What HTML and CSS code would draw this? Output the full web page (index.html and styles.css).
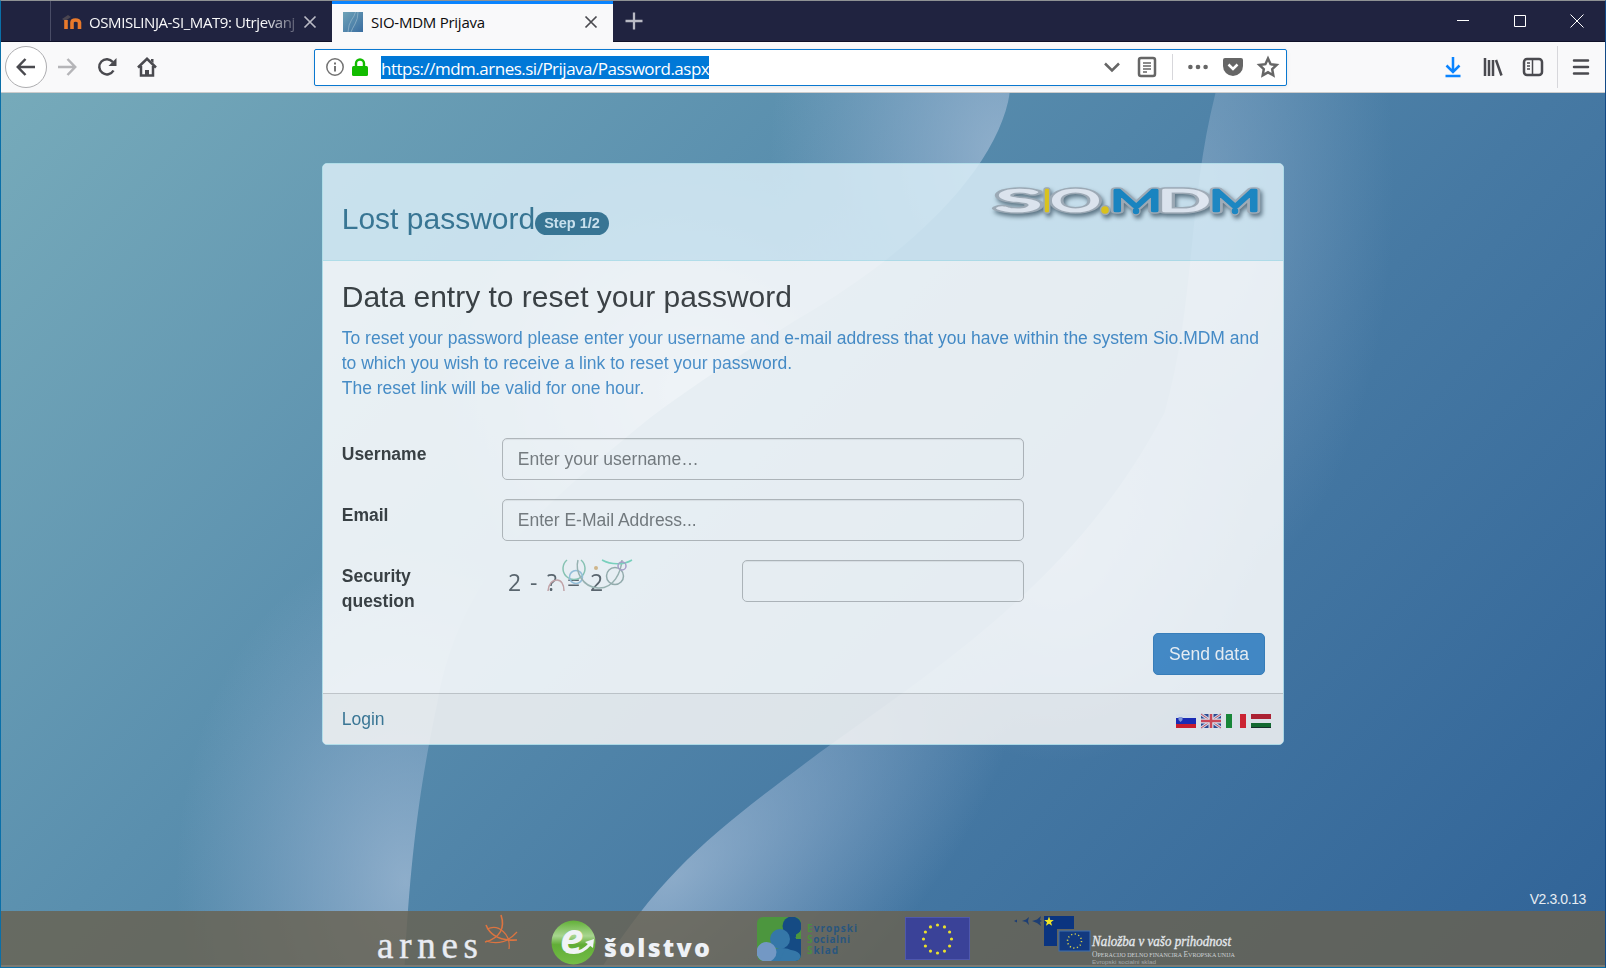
FILE: index.html
```html
<!DOCTYPE html>
<html lang="en">
<head>
  <meta charset="UTF-8" />
  <meta name="viewport" content="width=device-width, initial-scale=1.0" />
  <title>SIO-MDM Prijava</title>
  <link rel="stylesheet" href="styles.css">
</head>
<body>
  <!-- Tabs -->
  <div class="tabbar">
    <div class="tab-spacer"></div>
    <div class="tab">
      <svg class="favicon" viewBox="0 0 20 20">
        <path d="M0 7l6-4 3 2-6 4z" fill="#4b4550"/>
        <path d="M4 17V8M10 17v-6.500q0-2.500 3.500-2.500T17.500 10.500V17" fill="none" stroke="#e8792b" stroke-width="3.600"/>
      </svg>
      <span class="tab-title faded">OSMISLINJA-SI_MAT9: Utrjevanj</span>
      <svg class="close" viewBox="0 0 12 12"><path d="M.5.5l11 11M11.500.5l-11 11"/></svg>
    </div>
    <div class="tab active">
      <svg class="favicon" viewBox="0 0 20 20">
        <defs>
          <linearGradient id="fav" x1="0" y1="0" x2="1" y2="1">
            <stop offset="0" stop-color="#6fa3b8"/>
            <stop offset="1" stop-color="#3a6da0"/>
          </linearGradient>
        </defs>
        <path d="M0 0h20v20H0z" fill="url(#fav)"/>
        <path d="M12.500 0q-1 4-4 8T5 20M15 0q0 7-3 12t-4 8" fill="none" stroke="#8fb2c8" stroke-width=".8"/>
      </svg>
      <span class="tab-title">SIO-MDM Prijava</span>
      <svg class="close" viewBox="0 0 12 12"><path d="M.5.5l11 11M11.500.5l-11 11"/></svg>
    </div>
    <svg class="new-tab" viewBox="0 0 18 18"><path d="M9 .5v17M.5 9h17"/></svg>
    <div class="window-buttons">
      <svg viewBox="0 0 14 14"><path d="M1 6.500h12"/></svg>
      <svg viewBox="0 0 14 14"><path d="M1.500 1.500h11v11h-11z"/></svg>
      <svg viewBox="0 0 14 14"><path d="M.5.5l13 13M13.500.5l-13 13"/></svg>
    </div>
  </div>

  <!-- Toolbar -->
  <div class="toolbar">
    <div class="nav-buttons">
      <span class="back"><svg viewBox="0 0 20 20"><path d="M19 10H2M9.500 2L1.800 10l7.700 8"/></svg></span>
      <svg class="forward" viewBox="0 0 20 20"><path d="M1 10h17M10.500 2l7.700 8-7.700 8"/></svg>
      <svg class="reload" viewBox="0 0 20 20"><path d="M16.500 13.500A7.600 7.600 0 1 1 15.800 5"/><path class="solid" d="M19.500 1v8h-8z"/></svg>
      <svg class="home" viewBox="0 0 20 20"><path d="M1 10.500L10 1.800l9 8.700M4 9v9.500h12V9"/><path class="solid" d="M8 19v-6h4v6zM14 2h2.500v4L14 4z"/></svg>
    </div>
    <div class="urlbar">
      <svg class="info" viewBox="0 0 18 18"><circle cx="9" cy="9" r="8.200"/><path d="M9 8v5.500M9 4.500v2" stroke-width="2"/></svg>
      <svg class="lock" viewBox="0 0 16 18"><path d="M4 9V5.500a4 4 0 0 1 8 0V9" fill="none" stroke="#12bc00" stroke-width="2.400"/><rect x="0" y="8" width="16" height="10" rx="1.500" fill="#12bc00"/></svg>
      <span class="url">https://mdm.arnes.si/Prijava/Password.aspx</span>
      <div class="url-actions">
        <svg viewBox="0 0 20 20"><path d="M3 6.500l7 7 7-7"/></svg>
        <svg viewBox="0 0 20 20"><rect x="2" y="1" width="16" height="18" rx="2"/><path d="M6 6h8M6 9h8M6 12h8M6 15h4" stroke-width="1.300"/></svg>
        <i class="sep"></i>
        <svg viewBox="0 0 20 20"><g class="fill"><circle cx="2.400" cy="10" r="2.300"/><circle cx="10" cy="10" r="2.300"/><circle cx="17.600" cy="10" r="2.300"/></g></svg>
        <svg viewBox="0 0 20 20"><path class="fill" d="M2 1h16a2 2 0 0 1 2 2v6a10 10 0 0 1-20 0V3a2 2 0 0 1 2-2z"/><path d="M5.500 7.500L10 12l4.500-4.500" class="white"/></svg>
        <svg viewBox="0 0 20 20"><path d="M10 1.500l2.600 5.700 6 .7-4.400 4.200 1.100 6.200L10 15.300l-5.300 3 1.100-6.200L1.400 7.900l6-.7z"/></svg>
      </div>
    </div>
    <div class="tools">
      <svg class="download" viewBox="0 0 20 20"><path d="M10 0v14M3.500 8.500L10 15l6.500-6.500M2.500 19h15"/></svg>
      <svg viewBox="0 0 20 20"><path d="M2 1v18M6 3v16M10 3v16M13 3l5.500 15.500"/></svg>
      <svg viewBox="0 0 20 20"><rect x="1" y="2" width="18" height="16" rx="3"/><path d="M9.500 2v16" stroke-width="1.500"/><path d="M4 6h3M4 9h3M4 12h3" stroke-width="1.300"/></svg>
      <i class="sep"></i>
      <svg viewBox="0 0 20 20"><path d="M3 3.500h14M3 10h14M3 16.500h14" stroke-linecap="round"/></svg>
    </div>
  </div>

  <!-- Page -->
  <div class="page">
    <svg class="backdrop" viewBox="0 0 1606 875" preserveAspectRatio="none">
      <defs>
        <linearGradient id="sky" gradientUnits="userSpaceOnUse" x1="160" y1="-160" x2="1420" y2="1030">
          <stop offset="0" stop-color="#76aaba"/>
          <stop offset=".35" stop-color="#5a8fae"/>
          <stop offset=".65" stop-color="#4679a3"/>
          <stop offset="1" stop-color="#316498"/>
        </linearGradient>
        <radialGradient id="glow">
          <stop offset="0" stop-color="#adc2db" stop-opacity=".66"/>
          <stop offset=".4" stop-color="#a5bcd9" stop-opacity=".42"/>
          <stop offset="1" stop-color="#a0b8d8" stop-opacity="0"/>
        </radialGradient>
        <clipPath id="leftOfWave">
          <path d="M0 0H1010C1000 65 930 150 795 228C740 262 690 295 650 325C540 415 460 480 437 610C420 690 410 760 404 875H0z"/>
        </clipPath>
        <clipPath id="rightOfWave">
          <path d="M1606 0H1216C1188 110 1196 210 1165 320C1080 480 960 560 820 660C720 735 665 775 602 875H1606z"/>
        </clipPath>
      </defs>
      <path d="M0 0h1606v875H0z" fill="url(#sky)"/>
      <g clip-path="url(#leftOfWave)">
        <ellipse cx="1000" cy="60" rx="230" ry="330" fill="url(#glow)"/>
        <ellipse cx="700" cy="300" rx="260" ry="230" fill="url(#glow)"/>
        <ellipse cx="405" cy="790" rx="230" ry="340" fill="url(#glow)"/>
      </g>
      <g clip-path="url(#rightOfWave)">
        <ellipse cx="1195" cy="90" rx="200" ry="420" fill="url(#glow)" opacity=".6"/>
        <ellipse cx="1060" cy="450" rx="200" ry="220" fill="url(#glow)" opacity=".6"/>
        <ellipse cx="675" cy="785" rx="430" ry="200" fill="url(#glow)" transform="rotate(-42 675 785)"/>
      </g>
    </svg>

    <div class="panel">
      <div class="panel-heading">
        <h3>Lost password<span class="badge">Step 1/2</span></h3>
        <svg class="logo" viewBox="0 0 276 42" width="276" height="42">
          <defs>
            <g id="wordmark">
              <g class="pale">
                <text x="4" y="31" textLength="45" lengthAdjust="spacingAndGlyphs">S</text>
                <text x="59" y="31" textLength="49" lengthAdjust="spacingAndGlyphs">O</text>
                <text x="166" y="31" textLength="52" lengthAdjust="spacingAndGlyphs">D</text>
              </g>
              <g class="yellow">
                <text x="51" y="31">I</text>
                <circle cx="113" cy="30" r="2.500"/>
              </g>
              <g class="blue">
                <text x="118" y="31" textLength="52" lengthAdjust="spacingAndGlyphs">M</text>
                <circle cx="144" cy="31" r="2"/>
                <text x="217" y="31" textLength="52" lengthAdjust="spacingAndGlyphs">M</text>
                <circle cx="243" cy="31" r="2"/>
              </g>
            </g>
          </defs>
          <use class="logo-edge" href="#wordmark"/>
          <use class="logo-face" href="#wordmark"/>
        </svg>
      </div>
      <div class="panel-body">
        <h3>Data entry to reset your password</h3>
        <p>To reset your password please enter your username and e-mail address that you have within the system Sio.MDM and to which you wish to receive a link to reset your password.<br>The reset link will be valid for one hour.</p>
        <div class="row">
          <label for="username">Username</label>
          <input id="username" type="text" placeholder="Enter your username…">
        </div>
        <div class="row">
          <label for="email">Email</label>
          <input id="email" type="text" placeholder="Enter E-Mail Address...">
        </div>
        <div class="row security">
          <label for="answer">Security question</label>
          <svg class="captcha" viewBox="0 0 140 31">
            <g font-family="Open Sans" font-size="23" fill="#5a5f64">
              <text x="6" y="31">2</text>
              <text x="28" y="31">-</text>
              <text x="45" y="31">?</text>
              <text x="65" y="31">=</text>
              <text x="88" y="31">2</text>
            </g>
            <g fill="none" stroke-width="1.500">
              <path d="M65 0a11 11 0 1 0 14 0" stroke="#8fccb4"/>
              <circle cx="74" cy="17" r="6.500" stroke="#9cc6e0"/>
              <path d="M46 31c1-8 5-11 9-11s7 4 7 11" stroke="#d3a8a8"/>
              <path d="M76 0c-3 11 4 27 20 28s23-16 24-28" stroke="#a2b8b2"/>
              <circle cx="113" cy="16" r="8.500" stroke="#9db1ad"/>
              <path d="M100 0c9 5 22 5 30 0" stroke="#7fdcc0"/>
              <circle cx="120" cy="6" r="4" stroke="#b3a3cc"/>
            </g>
            <circle cx="94" cy="8" r="2" fill="#e3bd86"/>
          </svg>
          <input id="answer" type="text">
        </div>
        <div class="actions"><button class="btn">Send data</button></div>
      </div>
      <div class="panel-footer">
        <a class="login">Login</a>
        <div class="flags">
          <svg viewBox="0 0 20 14"><path d="M0 0h20v5H0z" fill="#eef1f7"/><path d="M0 4h20v6H0z" fill="#1420b8"/><path d="M0 10h20v4H0z" fill="#e0101c"/><path d="M2.500 3h4v3l-2 2-2-2z" fill="#8c9be0"/></svg>
          <svg viewBox="0 0 20 14"><path d="M0 0h20v14H0z" fill="#2a428f"/><path d="M0 0l20 14M20 0L0 14" stroke="#dfe5f1" stroke-width="3"/><path d="M0 0l20 14M20 0L0 14" stroke="#dc4a58" stroke-width="1"/><path d="M10 0v14M0 7h20" stroke="#eef1f7" stroke-width="5"/><path d="M10 0v14M0 7h20" stroke="#e0404c" stroke-width="2.500"/></svg>
          <svg viewBox="0 0 20 14"><path d="M0 0h6v14H0z" fill="#128a28"/><path d="M6 0h8v14H6z" fill="#f3f3f5"/><path d="M14 0h6v14h-6z" fill="#e31822"/></svg>
          <svg viewBox="0 0 20 14"><path d="M0 0h20v5H0z" fill="#bd1422"/><path d="M0 5h20v4H0z" fill="#f3f3f5"/><path d="M0 9h20v5H0z" fill="#0d6820"/><path d="M0 13h20v1H0z" fill="#10241a"/></svg>
        </div>
      </div>
    </div>

    <div class="version">V2.3.0.13</div>

    <div class="sponsors">
      <svg class="arnes" viewBox="0 0 146 54" width="146" height="54">
        <text x="1" y="46.500" font-family="Liberation Serif" font-size="37" fill="#e9ecf2" stroke="#e9ecf2" stroke-width=".4" textLength="101">arnes</text>
        <g fill="none" stroke="#dc7440" stroke-width="1.600">
          <path d="M125 4c4 12 0 23-16 27"/>
          <path d="M110 14c4 10 14 16 31 15"/>
          <path d="M111 18c12-6 24 6 22 20M110 30c12 4 22 1 31-9" stroke-width="1.200"/>
        </g>
      </svg>
      <svg class="solstvo" viewBox="0 0 160 54" width="160" height="54">
        <defs>
          <linearGradient id="ball" x1="0" y1="0" x2="0" y2="1">
            <stop offset="0" stop-color="#62b038"/>
            <stop offset=".35" stop-color="#a8d590"/>
            <stop offset=".55" stop-color="#61ad36"/>
            <stop offset="1" stop-color="#74bd48"/>
          </linearGradient>
        </defs>
        <circle cx="22.500" cy="31.500" r="22" fill="url(#ball)"/>
        <text x="9" y="42" font-family="Open Sans" font-size="42" font-weight="bold" font-style="italic" fill="#f0f3f6">e</text>
        <path d="M15 40q14 5 24-7" fill="none" stroke="#f0f3f6" stroke-width="3"/>
        <path d="M34 31l9-3-1 9z" fill="#f0f3f6"/>
        <text x="53" y="46" font-family="Open Sans" font-size="25" font-weight="800" fill="#eef1f6" textLength="106">šolstvo</text>
      </svg>
      <svg class="ess" viewBox="0 0 102 54" width="102" height="54">
        <defs><clipPath id="essBox"><rect x="0" y="6" width="44" height="44" rx="6"/></clipPath></defs>
        <g clip-path="url(#essBox)">
          <path d="M0 0h44v54H0z" fill="#4c963e"/>
          <path d="M30 20h9v8h5v26H20z" fill="#154b84"/>
          <circle cx="35" cy="15" r="9.500" fill="#154b84"/>
          <path d="M38 27l6-6v6z" fill="#4c963e"/>
          <ellipse cx="25" cy="46" rx="15" ry="9" fill="#3577a8"/>
          <circle cx="23" cy="28" r="10" fill="#3577a8"/>
          <circle cx="9.500" cy="41" r="10" fill="#7398c4"/>
          <path d="M28 39q16-1 16 9v6H20z" fill="#3577a8"/>
        </g>
        <g font-family="Open Sans" font-size="10" font-weight="700" fill="#29567e">
          <text x="50" y="21" textLength="50"><tspan fill="#4b8f3e">E</tspan>vropski</text>
          <text x="50" y="32" textLength="43"><tspan fill="#4b8f3e">S</tspan>ocialni</text>
          <text x="50" y="43" textLength="31"><tspan fill="#4b8f3e">S</tspan>klad</text>
        </g>
      </svg>
      <svg class="eu" viewBox="0 0 65 54" width="65" height="54">
        <rect x=".5" y="6.500" width="64" height="42" fill="#3a4298" stroke="#4f58ad"/>
        <g fill="#e9e02c">
          <circle cx="32.500" cy="14" r="1.600"/><circle cx="39.500" cy="15.900" r="1.600"/><circle cx="44.600" cy="21" r="1.600"/>
          <circle cx="46.500" cy="28" r="1.600"/><circle cx="44.600" cy="35" r="1.600"/><circle cx="39.500" cy="40.100" r="1.600"/>
          <circle cx="32.500" cy="42" r="1.600"/><circle cx="25.500" cy="40.100" r="1.600"/><circle cx="20.400" cy="35" r="1.600"/>
          <circle cx="18.500" cy="28" r="1.600"/><circle cx="20.400" cy="21" r="1.600"/><circle cx="25.500" cy="15.900" r="1.600"/>
        </g>
      </svg>
      <svg class="invest" viewBox="0 0 226 54" width="226" height="54">
        <path d="M31 5h30v13H44v17H31z" fill="#0a3480"/>
        <rect x="46" y="20" width="31" height="20" fill="#123a80" stroke="#3d6fb0"/>
        <circle cx="61.500" cy="30" r="7" fill="none" stroke="#d8d24a" stroke-width="1.500" stroke-dasharray="1.200 2.465"/>
        <path d="M36 5.500l1.300 3.400h3.500L38 11.200l1.100 3.600-3.100-2-3.100 2 1.100-3.600-2.800-2.300h3.500z" fill="#f0e526"/>
        <path d="M28 5l-1 4 2 1-2 1 1 4-4-3-5-2 5-1.500zM16 6l-1 4 1 4-3-3-4-1 4-1.500zM4 8.500v3l-3-1.500z" fill="#1d3e74"/>
        <text x="79" y="35" font-family="Liberation Serif" font-size="15" font-style="italic" fill="#e4e8ec" stroke="#e4e8ec" stroke-width=".35" textLength="139" lengthAdjust="spacingAndGlyphs">Naložba v vašo prihodnost</text>
        <text x="79" y="45.500" font-family="Liberation Serif" font-size="7.500" fill="#ccd0d4" textLength="143" lengthAdjust="spacingAndGlyphs">O<tspan font-size="6">PERACIJO DELNO FINANCIRA </tspan>E<tspan font-size="6">VROPSKA UNIJA</tspan></text>
        <text x="79" y="53" font-family="Liberation Sans" font-size="6" fill="#a4a9ab" textLength="64" lengthAdjust="spacingAndGlyphs">Evropski socialni sklad</text>
      </svg>
    </div>
  </div>
</body>
</html>
```
FILE: styles.css
```css
* { box-sizing: border-box; }
body {
  margin: 0;
  height: 968px;
  display: flex;
  flex-direction: column;
  overflow: hidden;
  border: 1px solid #0a6fa8;
  border-top-color: #8f9294;
  border-right-color: #134a86;
  font-family: "Liberation Sans", Arial, sans-serif;
  font-size: 17.5px;
  line-height: 25px;
  color: #333;
}
svg { display: block; flex: none; overflow: visible; }

/* Tabs */
.tabbar {
  height: 41px;
  flex: none;
  display: flex;
  background: #202340;
  border-bottom: 1px solid #0f1128;
  font: 15px/40px "Open Sans", "Noto Sans", sans-serif;
  color: #f9f9fa;
}
.tab-spacer {
  width: 50px;
  border-right: 1px solid #494c66;
}
.tab {
  width: 281px;
  height: 40px;
  display: flex;
  align-items: center;
  padding: 2px 16px 0 11px;
}
.tab.active {
  height: 41px;
  background: #f9f9fa;
  border-top: 3px solid #0a84ff;
  color: #0c0c0d;
  padding: 0 16px 2px 11px;
}
.favicon {
  width: 20px;
  height: 20px;
  margin-right: 7px;
}
.active .favicon { margin-right: 8px; }
.tab-title {
  flex: 1;
  white-space: nowrap;
  letter-spacing: -0.25px;
}
.tab-title.faded {
  letter-spacing: -0.4px;
  -webkit-mask-image: linear-gradient(to right, #000 84%, rgba(0, 0, 0, .25));
  mask-image: linear-gradient(to right, #000 84%, rgba(0, 0, 0, .25));
}
.close {
  width: 12px;
  height: 12px;
  margin-left: 8px;
  stroke: #b9bac4;
  stroke-width: 1.7;
}
.active .close { stroke: #4a4a4f; }
.new-tab {
  width: 18px;
  height: 18px;
  margin: 11px 0 0 12px;
  stroke: #b9bac4;
  stroke-width: 2.3;
}
.window-buttons {
  display: flex;
  gap: 43px;
  margin: 13px 21px 0 auto;
}
.window-buttons svg {
  width: 14px;
  height: 14px;
  fill: none;
  stroke: #fff;
}

/* Toolbar */
.toolbar {
  height: 51px;
  flex: none;
  display: flex;
  align-items: center;
  background: #f9f9fa;
  border-bottom: 1px solid #ccc;
}
.toolbar svg {
  width: 20px;
  height: 20px;
  fill: none;
  stroke: #4a4a4f;
  stroke-width: 2.5;
}
.nav-buttons {
  width: 313px;
  display: flex;
  align-items: center;
  padding-left: 4px;
}
.back {
  width: 42px;
  height: 42px;
  display: flex;
  align-items: center;
  justify-content: center;
  background: #fff;
  border: 1px solid #adadb0;
  border-radius: 50%;
}
.toolbar .forward { stroke: #b5b5b8; margin: 0 20px 0 10px; }
.reload { margin-right: 20px; }
.toolbar .solid { fill: #4a4a4f; stroke: none; }
.urlbar {
  width: 973px;
  height: 37px;
  display: flex;
  align-items: center;
  padding-left: 11px;
  background: #fff;
  border: 1px solid #0a78d0;
  border-radius: 2px;
  box-shadow: 0 1px 4px rgba(0, 0, 0, .08);
}
.toolbar .info {
  width: 18px;
  height: 18px;
  stroke: #737373;
  stroke-width: 1.5;
}
.toolbar .lock {
  width: 16px;
  height: 18px;
  margin: 0 13px 0 8px;
  stroke: none;
}
.url {
  height: 23px;
  background: #0078d7;
  color: #fff;
  font: 17px/25px "Open Sans", "Noto Sans", sans-serif;
  letter-spacing: -0.5px;
  white-space: nowrap;
}
.url-actions {
  margin: 0 8px 0 auto;
  display: flex;
  align-items: center;
  gap: 15px;
}
.toolbar .url-actions svg { stroke: #666; }
.toolbar .url-actions .fill { fill: #666; stroke: none; }
.url-actions .white { stroke: #fff; }
.sep {
  width: 1px;
  height: 26px;
  background: #d7d7db;
}
.tools {
  display: flex;
  align-items: center;
  gap: 20px;
  margin: 0 14px 0 auto;
}
.tools .sep { height: 42px; margin: 0 -7px 0 -6px; }
.toolbar .download { stroke: #0a84ff; }

/* Page */
.page {
  flex: 1;
  position: relative;
  display: flex;
  flex-direction: column;
  align-items: center;
}
.backdrop {
  position: absolute;
  inset: 0;
  width: 100%;
  height: 100%;
  overflow: hidden;
  z-index: -1;
}
.panel {
  width: 962px;
  height: 582px;
  margin-top: 70px;
  display: flex;
  flex-direction: column;
  background: #fff;
  border: 1px solid #bce8f1;
  border-radius: 5px;
  opacity: .86;
}
h3 {
  margin: 0;
  font-size: 30px;
  font-weight: 500;
  line-height: 33px;
}
.panel-heading {
  height: 97px;
  flex: none;
  display: flex;
  justify-content: space-between;
  padding: 38px 15px 0 18.75px;
  color: #31708f;
  background: #d9edf7;
  border-bottom: 1px solid #bce8f1;
  border-radius: 4px 4px 0 0;
}
.badge {
  display: inline-block;
  padding: 4px 9px;
  font-size: 14.5px;
  font-weight: bold;
  line-height: 15px;
  color: #d9edf7;
  background: #31708f;
  border-radius: 12.5px;
  vertical-align: 1px;
}
/* Wordmark: grey edge under a coloured face */
.logo {
  margin-top: -22px;
  font-family: Lato, "Liberation Sans", sans-serif;
  font-size: 30px;
  font-weight: 300;
  filter: drop-shadow(2px 3px 2px rgba(30, 50, 65, .65));
}
.logo .pale { color: #f2f3f9; }
.logo .yellow { color: #f0cc08; }
.logo .blue { color: #1185c4; }
.logo-edge {
  fill: #a9b0b8;
  stroke: #a9b0b8;
  stroke-width: 5.5;
  stroke-linejoin: round;
}
.logo-face {
  fill: currentColor;
  stroke: currentColor;
  stroke-width: 2.6;
  stroke-linejoin: round;
}
.panel-body {
  flex: 1;
  padding: 18.5px 18.75px 0;
}
.panel-body p {
  margin: 13px 0 37px;
  color: #428bca;
}
.row {
  display: grid;
  grid-template-columns: 160.5px 522px;
  margin-bottom: 18.5px;
}
.row.security {
  grid-template-columns: 160.5px 240px 282px;
  margin-bottom: 0;
}
label {
  padding: 4px 40px 0 0;
  font-weight: bold;
}
input {
  width: 100%;
  height: 42.5px;
  padding: 7.5px 14.5px 6.5px;
  font: inherit;
  background: transparent;
  border: 1px solid #bbb;
  border-radius: 5px;
  box-shadow: inset 0 1px 1px rgba(0, 0, 0, .075);
}
input::placeholder { color: #777; opacity: 1; }
.captcha { width: 140px; height: 31px; }
.actions {
  display: flex;
  justify-content: flex-end;
  margin: 19px -.75px 0 0;
}
.btn {
  width: 112px;
  height: 42px;
  padding: 1px 0 0;
  font: inherit;
  color: #fff;
  background: #428bca;
  border: 1px solid #357ebd;
  border-radius: 5px;
}
.panel-footer {
  height: 51px;
  flex: none;
  display: flex;
  justify-content: space-between;
  padding: 13px 12px 0 18.75px;
  background: #f5f5f5;
  border-top: 1px solid #ccc;
  border-radius: 0 0 4px 4px;
}
.login { color: #31708f; }
.flags {
  display: flex;
  gap: 5px;
  padding-top: 7px;
}
.flags svg { width: 20px; height: 14px; }
.version {
  margin: auto 19px -1px auto;
  font-size: 14px;
  letter-spacing: -.4px;
  color: #e6edf3;
}
.sponsors {
  width: 100%;
  height: 56px;
  display: flex;
  padding-left: 375px;
  background: rgba(105, 97, 80, .82);
  border-bottom: 2px solid #7c7a72;
}
.solstvo { margin-left: 29px; }
.ess { margin-left: 46px; }
.eu { margin-left: 46px; }
.invest { margin-left: 43px; }
```
